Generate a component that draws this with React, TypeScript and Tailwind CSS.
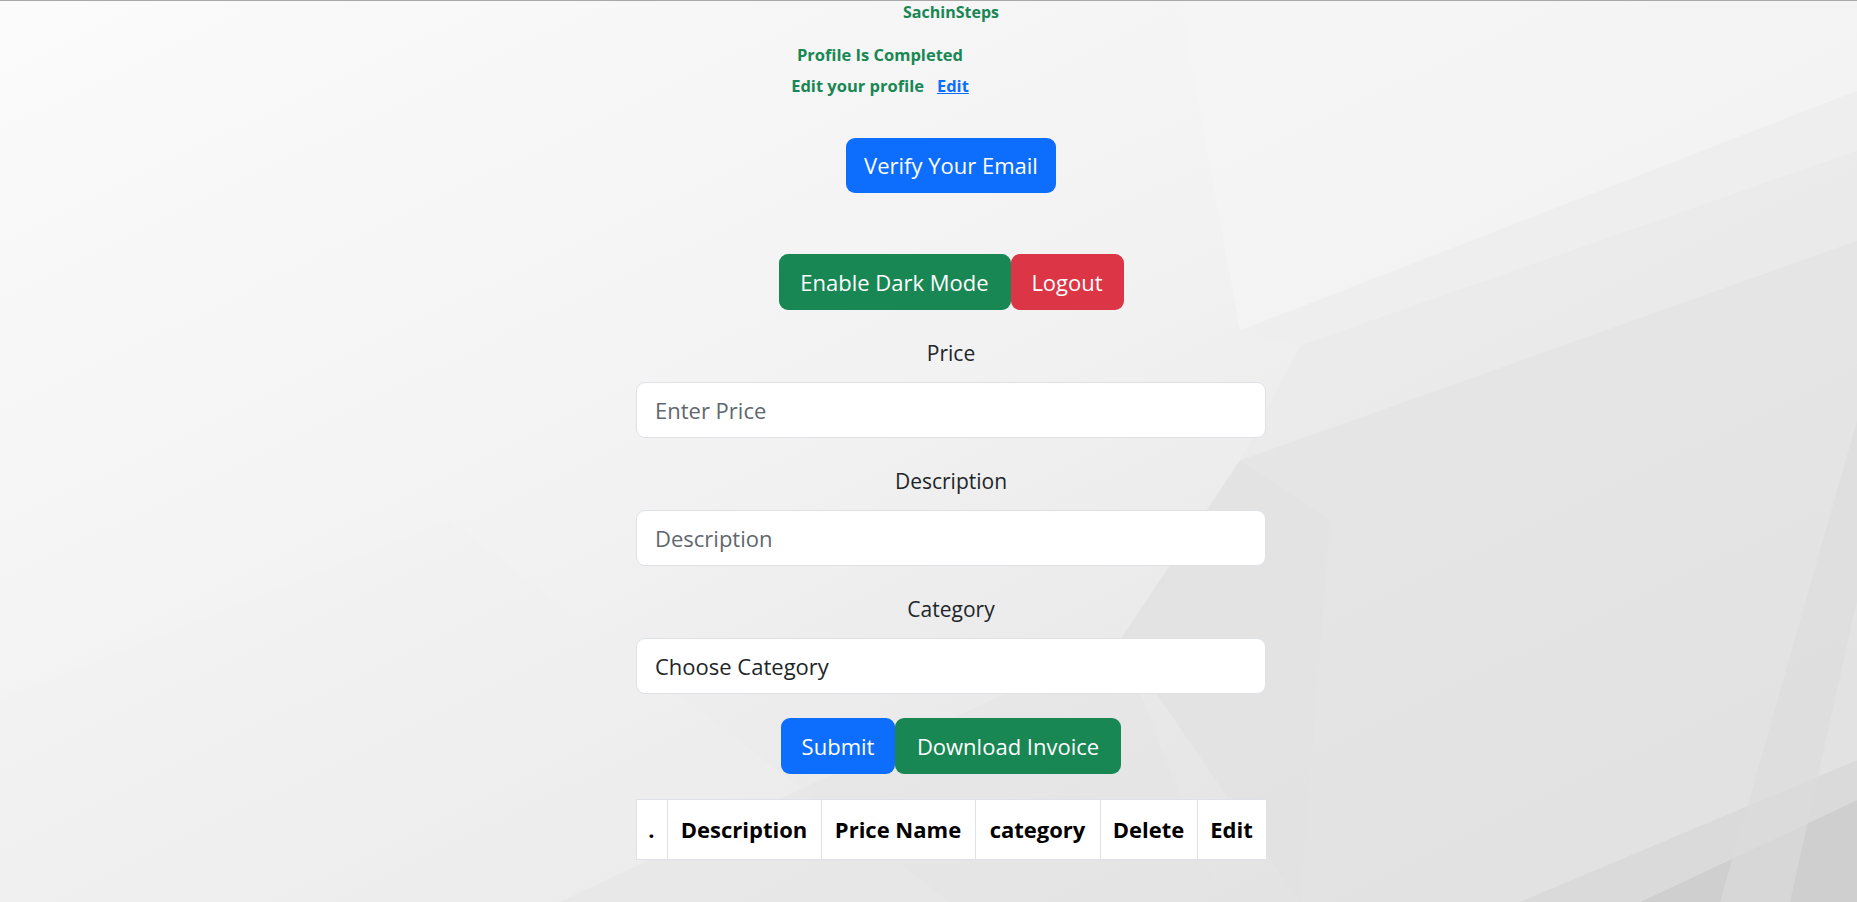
import React from "react"

const font = { fontFamily: '"Open Sans", "Noto Sans", sans-serif' }

function Backdrop() {
  // faceted grey wallpaper
  return (
    <svg
      className="absolute inset-0 w-full h-full"
      viewBox="0 0 1857 902"
      preserveAspectRatio="none"
      aria-hidden="true"
    >
      <defs>
        <linearGradient id="bg" x1="0" y1="0" x2="1" y2="1">
          <stop offset="0" stopColor="#fbfbfb" />
          <stop offset="0.45" stopColor="#f2f2f2" />
          <stop offset="1" stopColor="#dddddd" />
        </linearGradient>
      </defs>
      <rect width="1857" height="902" fill="url(#bg)" />
      <polygon points="1180,0 1857,0 1857,90 1240,330" fill="#f5f5f5" opacity="0.7" />
      <polygon points="1240,330 1857,90 1857,150 1300,345" fill="#eeeeee" opacity="0.7" />
      <polygon points="1300,345 1857,150 1857,240 1240,460" fill="#e9e9e9" opacity="0.7" />
      <polygon points="1240,460 1857,240 1857,902 1300,902 1120,640" fill="#e3e3e3" opacity="0.7" />
      <polygon points="1120,640 1240,460 1330,520 1300,902" fill="#e2e2e2" opacity="0.5" />
      <polygon points="1640,902 1857,800 1857,902" fill="#cfcfcf" />
      <polygon points="1520,902 1857,760 1857,800 1640,902" fill="#d8d8d8" opacity="0.8" />
      <polygon points="1720,902 1857,420 1857,600 1790,902" fill="#dcdcdc" opacity="0.6" />
      <polygon points="0,700 450,520 950,902 0,902" fill="#f0f0f0" opacity="0.4" />
      <polygon points="560,902 1120,640 1220,902" fill="#e4e4e4" opacity="0.5" />
    </svg>
  )
}

export default function App() {
  return (
    <div className="relative min-h-screen overflow-hidden border-t border-[#a8a8a8]" style={font}>
      <Backdrop />
      <div className="relative flex flex-col items-center pl-[45px] pb-10">
        {/* header text */}
        <div className="text-[16px] leading-[22px] font-bold text-[#198754]">SachinSteps</div>
        <div className="mt-[19px] mr-[142px] flex flex-col items-center text-[16.5px] font-bold text-[#198754]">
          <div className="leading-[26px]">Profile Is Completed</div>
          <div className="mt-[5px] leading-[26px]">
            Edit your profile
            <a href="#" className="ml-[13px] text-[#0d6efd] underline">Edit</a>
          </div>
        </div>

        <button className="mt-[39px] h-[55px] rounded-[9px] bg-[#0d6efd] px-[18px] text-[22px] text-white">
          Verify Your Email
        </button>

        <div className="mt-[61px] flex">
          <button className="h-[56px] w-[232px] rounded-[9px] bg-[#198754] text-[22px] text-white">
            Enable Dark Mode
          </button>
          <button className="h-[56px] w-[113px] rounded-[9px] bg-[#dc3545] text-[22px] text-white">
            Logout
          </button>
        </div>

        {/* form */}
        <div className="w-[630px] flex flex-col items-center text-[#212529]">
          <label className="mt-[28px] text-[21px] leading-[31px]">Price</label>
          <input
            className="mt-[13px] h-[56px] w-full rounded-[9px] border border-[#dee2e6] bg-white px-[18px] text-[22px] placeholder-[#60676e] outline-none"
            placeholder="Enter Price"
          />
          <label className="mt-[28px] text-[21px] leading-[31px]">Description</label>
          <input
            className="mt-[13px] h-[56px] w-full rounded-[9px] border border-[#dee2e6] bg-white px-[18px] text-[22px] placeholder-[#60676e] outline-none"
            placeholder="Description"
          />
          <label className="mt-[28px] text-[21px] leading-[31px]">Category</label>
          <div className="mt-[13px] flex h-[56px] w-full items-center rounded-[9px] border border-[#dee2e6] bg-white px-[18px] text-[22px]">
            Choose Category
          </div>

          <div className="mt-[24px] flex">
            <button className="h-[56px] w-[114px] rounded-[9px] bg-[#0d6efd] text-[22px] text-white">
              Submit
            </button>
            <button className="h-[56px] w-[226px] rounded-[9px] bg-[#198754] text-[22px] text-white">
              Download Invoice
            </button>
          </div>

          <table className="mt-[25px] w-full table-fixed border-collapse bg-white text-[22px] font-bold text-black">
            <colgroup>
              <col className="w-[31px]" />
              <col className="w-[154px]" />
              <col className="w-[154px]" />
              <col className="w-[125px]" />
              <col className="w-[97px]" />
              <col className="w-[69px]" />
            </colgroup>
            <thead>
              <tr className="h-[60px]">
                {[".", "Description", "Price Name", "category", "Delete", "Edit"].map((h) => (
                  <th key={h} className="border border-[#dee2e6] px-0 text-center font-bold whitespace-nowrap">
                    {h}
                  </th>
                ))}
              </tr>
            </thead>
          </table>
        </div>
      </div>
    </div>
  )
}
